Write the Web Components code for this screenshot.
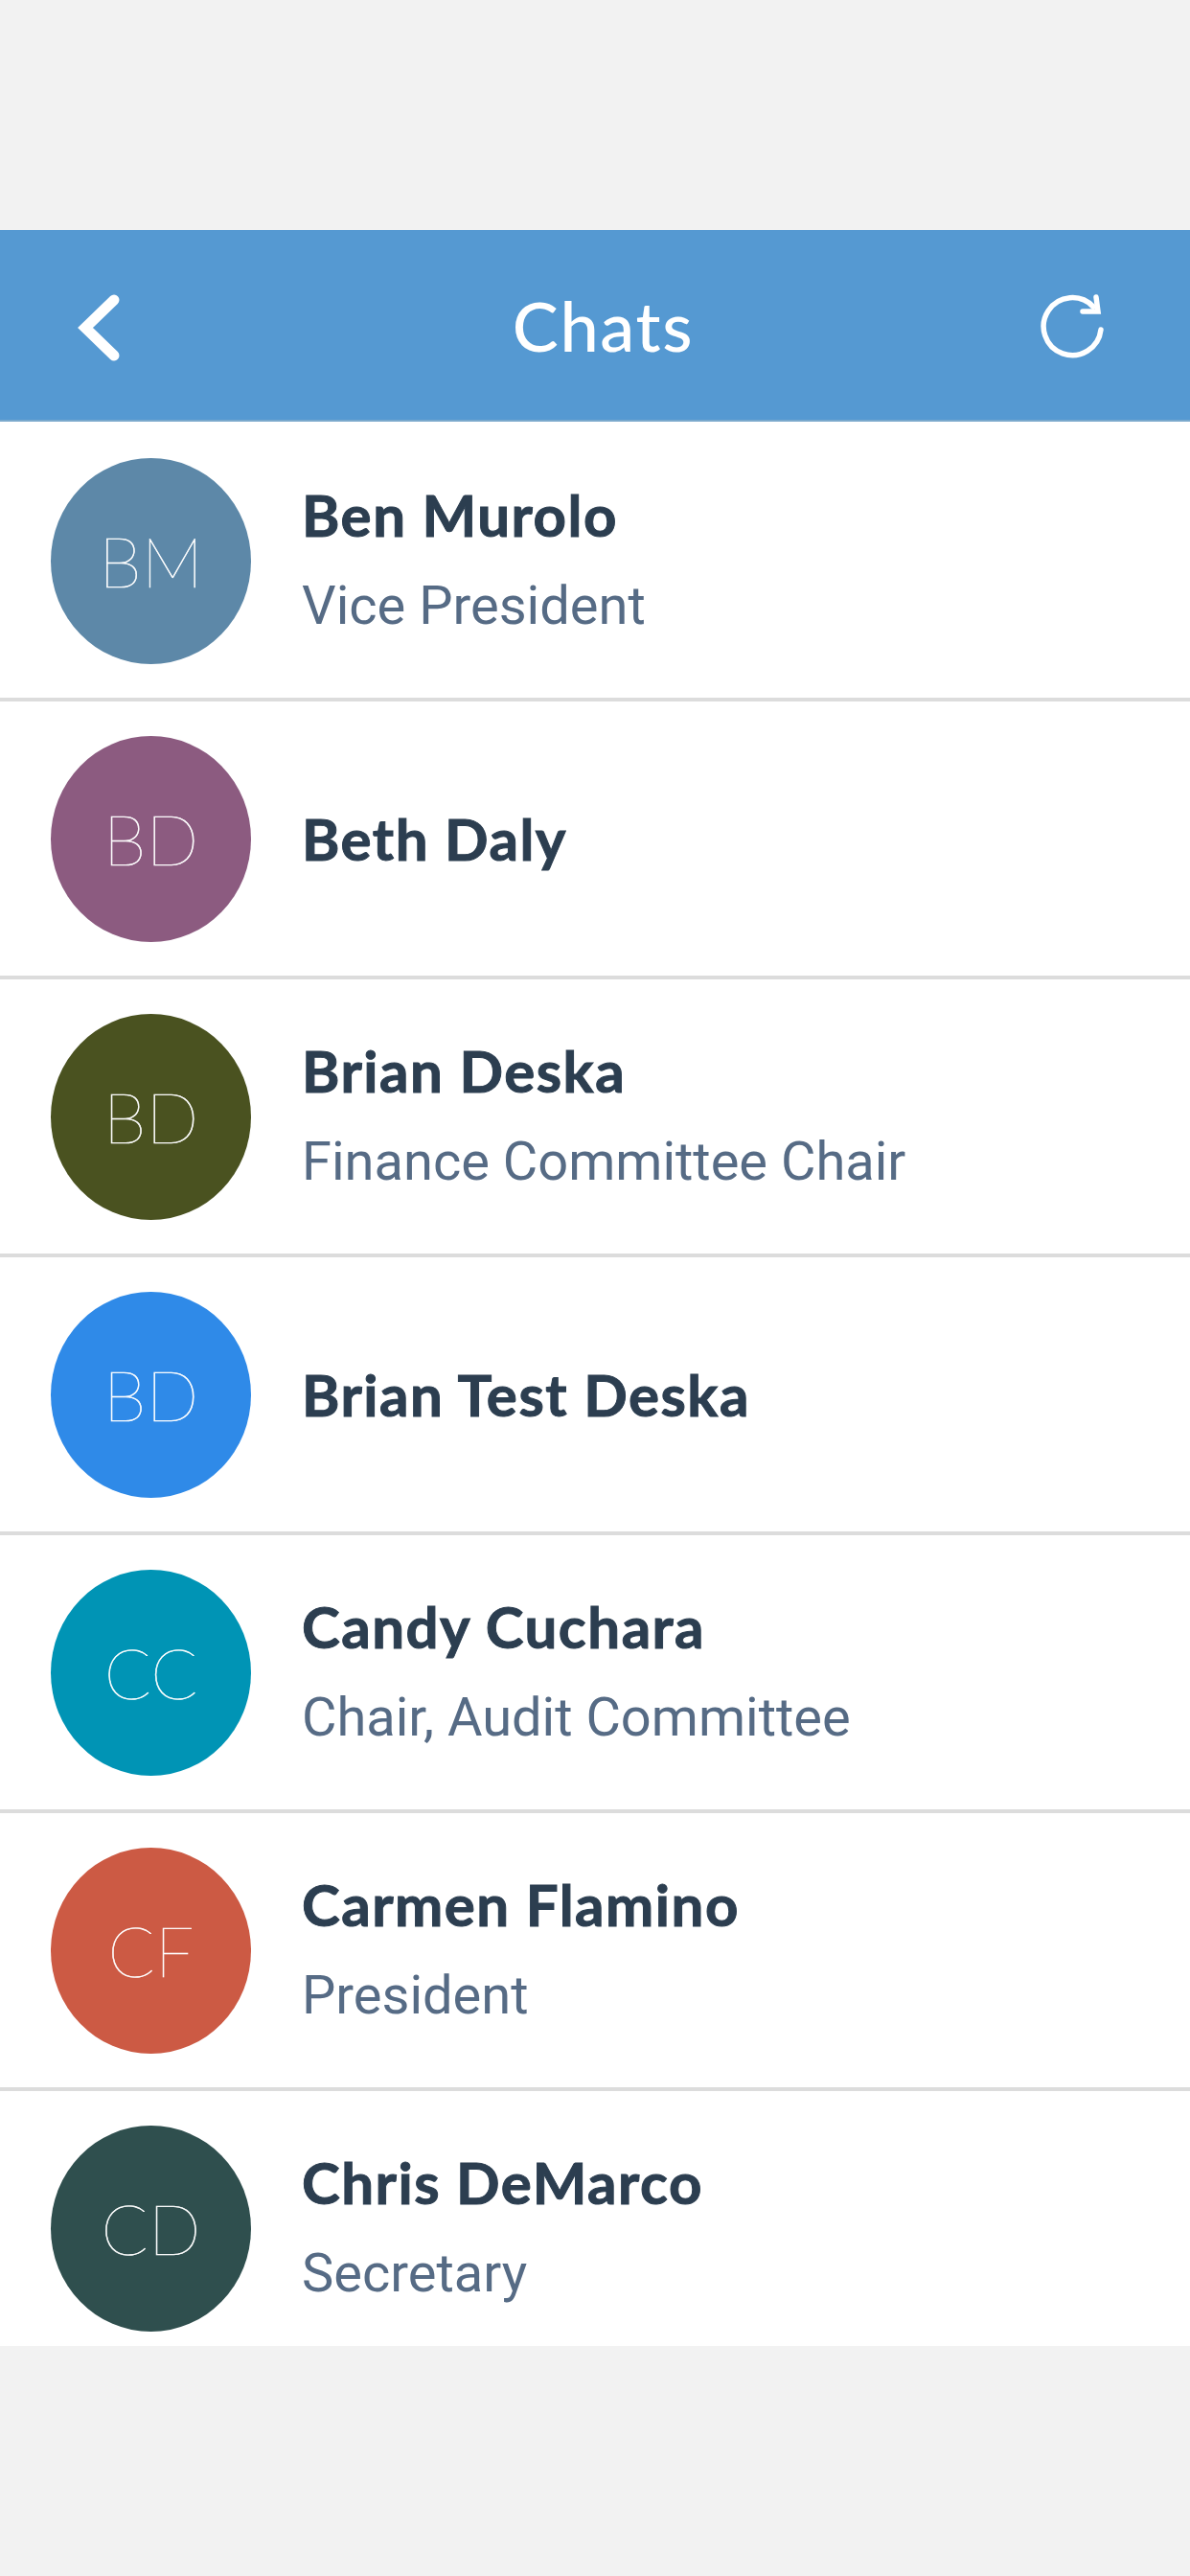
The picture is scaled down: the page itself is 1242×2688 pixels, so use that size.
<!DOCTYPE html>
<html>
<head>
<meta charset="utf-8">
<title>Chats</title>
<style>
  html, body { margin: 0; background: #f2f2f2; }
  body { padding-top: 240px; height: 2448px; overflow: hidden; }
</style>
</head>
<body>
<chats-screen>
  <chat-header slot="header">Chats</chat-header>
  <chat-row initials="BM" color="#5d88a8">Ben Murolo<span slot="role">Vice President</span></chat-row>
  <chat-row initials="BD" color="#8c5b80">Beth Daly</chat-row>
  <chat-row initials="BD" color="#4a5220">Brian Deska<span slot="role">Finance Committee Chair</span></chat-row>
  <chat-row initials="BD" color="#2f8ae8">Brian Test Deska</chat-row>
  <chat-row initials="CC" color="#0094b5">Candy Cuchara<span slot="role">Chair, Audit Committee</span></chat-row>
  <chat-row initials="CF" color="#cc5a44">Carmen Flamino<span slot="role">President</span></chat-row>
  <chat-row initials="CD" color="#2f4f4e">Chris DeMarco<span slot="role">Secretary</span></chat-row>
</chats-screen>
<script>
class ChatsScreen extends HTMLElement {
  constructor() {
    super();
    this.attachShadow({ mode: 'open' });
    this.shadowRoot.innerHTML = `
      <style>
        :host { display: block; width: 1242px; }
        .list { display: flex; flex-direction: column; box-sizing: border-box; padding-top: 2px; background: #fff; height: 2008px; overflow: hidden; }
      </style>
      <slot name="header"></slot>
      <div class="list"><slot></slot></div>
    `;
  }
}

class ChatHeader extends HTMLElement {
  constructor() {
    super();
    this.attachShadow({ mode: 'open' });
    this.shadowRoot.innerHTML = `
      <style>
        :host {
          display: grid;
          grid-template-columns: 1fr auto 1fr;
          align-items: center;
          box-sizing: border-box;
          height: 200px;
          padding: 0 86px 0 81px;
          background: #5599d2;
          border-bottom: 2px solid #7ba9cc;
          color: #fff;
          font: 500 72px Lato, "Open Sans", sans-serif;
          letter-spacing: 1.7px;
        }
        .title { margin-left: 22px; }
        svg { display: block; margin-top: 6px; }
        .refresh { justify-self: end; }
      </style>
      <svg width="48" height="70" viewBox="0 0 48 70" fill="none" stroke="#fff" stroke-width="11" stroke-linecap="round" stroke-linejoin="miter">
        <path d="M38 6 L8 35 L38 64"/>
      </svg>
      <div class="title"><slot></slot></div>
      <svg class="refresh" width="70" height="70" viewBox="0 0 70 70" fill="none" stroke="#fff" stroke-width="5.5" stroke-linecap="round">
        <path d="M63 37 A30 30 0 1 1 55 13"/>
        <path d="M58 3 L60 18 L44 18" stroke-width="5.5" stroke-linejoin="miter"/>
      </svg>
    `;
  }
}

class ChatRow extends HTMLElement {
  constructor() {
    super();
    this.attachShadow({ mode: 'open' });
  }

  connectedCallback() {
    const initials = this.getAttribute('initials') || '';
    const color = this.getAttribute('color') || '#888';

    this.shadowRoot.innerHTML = `
      <style>
        :host {
          display: flex;
          flex: none;
          align-items: center;
          box-sizing: border-box;
          height: 290px;
          padding-left: 53px;
          gap: 53px;
          border-bottom: 4px solid #dcdcdc;
          background: #fff;
        }
        .avatar {
          flex: none;
          display: flex;
          align-items: center;
          justify-content: center;
          width: 209px;
          height: 215px;
          border-radius: 50%;
          background: ${color};
          color: #fff;
          font: 100 72px Lato, sans-serif;
          -webkit-text-stroke: 0.6px #fff;
        }
        .text { display: flex; flex-direction: column; }
        .name {
          font: 700 60px/95px Lato, "Open Sans", sans-serif;
          letter-spacing: 1.5px;
          -webkit-text-stroke: 1px #2c3e50;
          color: #2c3e50;
        }
        .role {
          font: 400 56px/95px Roboto, sans-serif;
          color: #566b85;
        }
      </style>
      <div class="avatar">${initials}</div>
      <div class="text">
        <div class="name"><slot></slot></div>
        <div class="role" ${this.querySelector('[slot=role]') ? '' : 'hidden'}><slot name="role"></slot></div>
      </div>
    `;
  }
}

customElements.define('chats-screen', ChatsScreen);
customElements.define('chat-header', ChatHeader);
customElements.define('chat-row', ChatRow);
</script>
</body>
</html>
